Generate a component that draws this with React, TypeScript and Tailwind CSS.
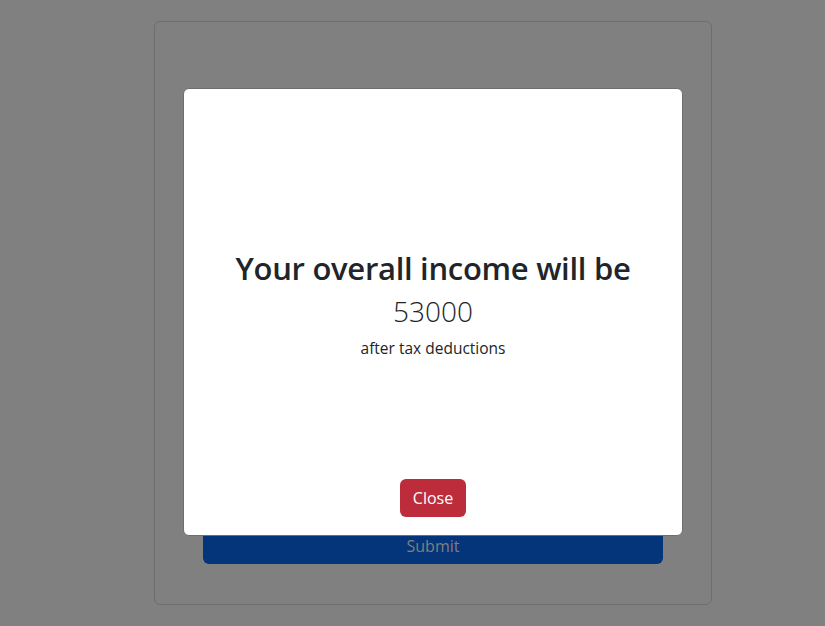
export default function App() {
  return (
    <div
      className="relative min-h-screen w-full bg-[#808080] overflow-hidden"
      style={{ fontFamily: '"Open Sans", "Noto Sans", sans-serif' }}
    >
      {/* Form card behind the backdrop */}
      <div className="ml-[154px] mt-[21px] w-[558px] h-[584px] border border-[#6e6e6e] rounded-md flex flex-col justify-end px-[48px] pb-[40px]">
        <button className="h-[37px] w-full rounded-md bg-[#04357a] text-[#7f7f7f] text-base">
          Submit
        </button>
      </div>

      {/* Modal */}
      <div className="absolute left-[183px] top-[88px] w-[500px] h-[448px] bg-white rounded-md border border-[#6e6e6e] flex flex-col items-center text-[#212529]">
        <div className="flex-1 flex flex-col items-center pt-[161px]">
          <h2 className="text-[31px] font-semibold leading-[1.2] tracking-[-0.3px]">Your overall income will be</h2>
          <div className="text-[28px] font-light leading-[1.2] mt-[8px]">53000</div>
          <p className="text-[15.5px] leading-normal mt-[8px]">after tax deductions</p>
        </div>
        <button className="mb-[18px] h-[38px] px-[13px] rounded-md bg-[#bd2c3b] text-white text-base">
          Close
        </button>
      </div>
    </div>
  );
}
